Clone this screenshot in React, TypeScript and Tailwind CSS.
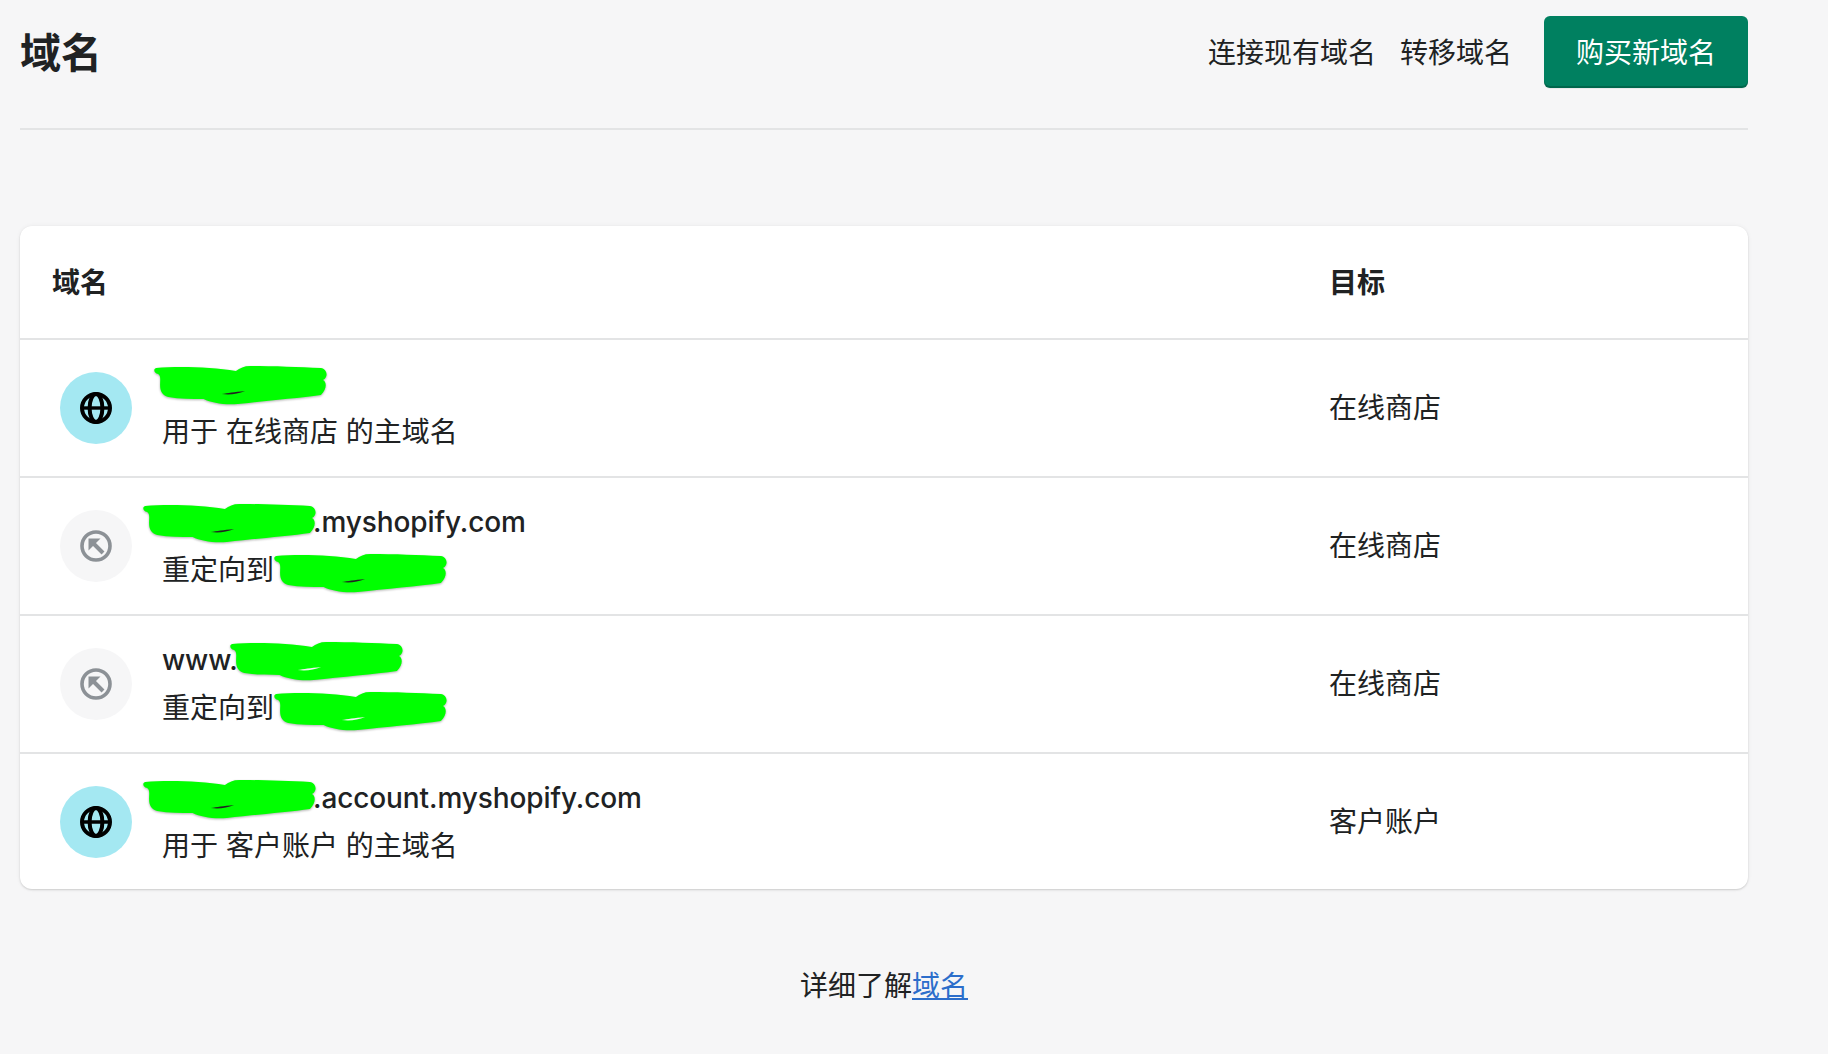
import React from "react";

const FONT = "font-['Inter','Noto_Sans_CJK_SC',sans-serif]";

function Scribble({ className, slit = "#222" }: { className: string; slit?: string }) {
  return (
    <svg
      viewBox="0 0 174 42"
      preserveAspectRatio="none"
      className={`absolute top-1/2 -translate-y-1/2 w-[176px] h-[42px] drop-shadow-[0_1px_1px_rgba(0,0,0,0.3)] ${className}`}
    >
      <path
        d="M3 3C25 1 58 2 82 6C86 3 90 1 96 1C120 1 145 2 166 3C172 4 174 12 168 15C172 17 172 24 166 30C145 33 110 36 84 39C70 40 58 38 50 34C38 34 26 34 15 32C9 30 7 26 7 20C7 15 8 11 5 9C1 8 0 4 3 3Z"
        fill="#00ff00"
      />
      <path d="M68 29C74 28 80 27 91 26C84 29 76 30 68 29Z" fill={slit} />
    </svg>
  );
}

function Globe() {
  return (
    <svg viewBox="0 0 32 32" className="w-8 h-8" fill="none" stroke="#000" strokeWidth="4">
      <circle cx="16" cy="16" r="14" />
      <ellipse cx="16" cy="16" rx="6.4" ry="14" />
      <path d="M2 16h28" strokeWidth="3.4" />
    </svg>
  );
}

function Redirect() {
  return (
    <svg viewBox="0 0 32 32" className="w-8 h-8" fill="none" stroke="#8c9196" strokeWidth="3.6">
      <circle cx="16" cy="16" r="14" />
      <path d="M11 11l12 12" strokeWidth="4" />
      <path d="M8.5 20.5V8.5h12z" fill="#8c9196" stroke="none" />
    </svg>
  );
}

function Row({
  kind,
  name,
  sub,
  target,
  size = "h-[138px]",
}: {
  kind: "globe" | "redirect";
  name: React.ReactNode;
  sub: React.ReactNode;
  target: string;
  size?: string;
}) {
  return (
    <div className={`flex items-center border-t-2 border-[#e3e4e5] ${size}`}>
      <div className="flex-1 flex items-center pl-[40px]">
        <div
          className={`w-[72px] h-[72px] rounded-full flex items-center justify-center ${
            kind === "globe" ? "bg-[#a4e8f2]" : "bg-[#f6f6f7]"
          }`}
        >
          {kind === "globe" ? <Globe /> : <Redirect />}
        </div>
        <div className="ml-[30px]">
          <div className="h-[48px] leading-[48px] font-[550] tracking-[-0.1px] whitespace-nowrap">{name}</div>
          <div className="h-[48px] leading-[48px] whitespace-pre">{sub}</div>
        </div>
      </div>
      <div className="w-[419px]">{target}</div>
    </div>
  );
}

function Hidden({ width, className, slit }: { width: string; className: string; slit?: string }) {
  return (
    <span className={`relative inline-block h-[28px] align-middle ${width}`}>
      <Scribble className={className} slit={slit} />
    </span>
  );
}

export default function App() {
  return (
    <div className={`${FONT} min-h-[1054px] bg-[#f6f6f7] text-[#202223] text-[28px] pl-5 pr-20 pt-4`}>
      <header className="flex items-center justify-between h-[72px]">
        <h1 className="text-[41px] font-semibold leading-[56px] pt-[2px]">域名</h1>
        <div className="flex items-center">
          <span className="pt-[1px]">连接现有域名</span>
          <span className="ml-6 pt-[1px]">转移域名</span>
          <button className="ml-8 w-[204px] h-[72px] pt-[1px] rounded-[6px] bg-[#008060] text-white shadow-[inset_0_-2px_0_rgba(0,0,0,0.2),0_1px_0_rgba(0,0,0,0.05)]">
            购买新域名
          </button>
        </div>
      </header>
      <div className="mt-10 border-t-2 border-[#e3e4e5]" />
      <section className="mt-[96px] bg-white rounded-[12px] shadow-[0_0_5px_rgba(23,24,24,0.05),0_1px_2px_rgba(0,0,0,0.15)] overflow-hidden">
        <div className="flex items-center h-[112px] font-semibold pt-[1px]">
          <div className="flex-1 pl-8">域名</div>
          <div className="w-[419px]">目标</div>
        </div>
        <Row
          kind="globe"
          name={<Hidden width="w-[150px]" className="left-[-9px]" />}
          sub="用于 在线商店 的主域名"
          target="在线商店"
        />
        <Row
          kind="redirect"
          name={
            <>
              <Hidden width="w-[151px]" className="left-[-20px]" />
              .myshopify.com
            </>
          }
          sub={
            <>
              重定向到
              <Hidden width="w-[172px]" className="left-[-1px] mt-[2px]" />
            </>
          }
          target="在线商店"
        />
        <Row
          kind="redirect"
          name={
            <>
              www.
              <Hidden width="w-[172px]" className="left-[-9px]" slit="#f4f4f4" />
            </>
          }
          sub={
            <>
              重定向到
              <Hidden width="w-[172px]" className="left-[-1px] mt-[2px]" slit="#f4f4f4" />
            </>
          }
          target="在线商店"
        />
        <Row
          kind="globe"
          size="h-[137px] pt-[1px]"
          name={
            <>
              <Hidden width="w-[151px]" className="left-[-20px]" />
              .account.myshopify.com
            </>
          }
          sub="用于 客户账户 的主域名"
          target="客户账户"
        />
      </section>
      <p className="mt-[77px] text-center leading-[40px]">
        详细了解<a className="text-[#2c6ecb] underline">域名</a>
      </p>
    </div>
  );
}
